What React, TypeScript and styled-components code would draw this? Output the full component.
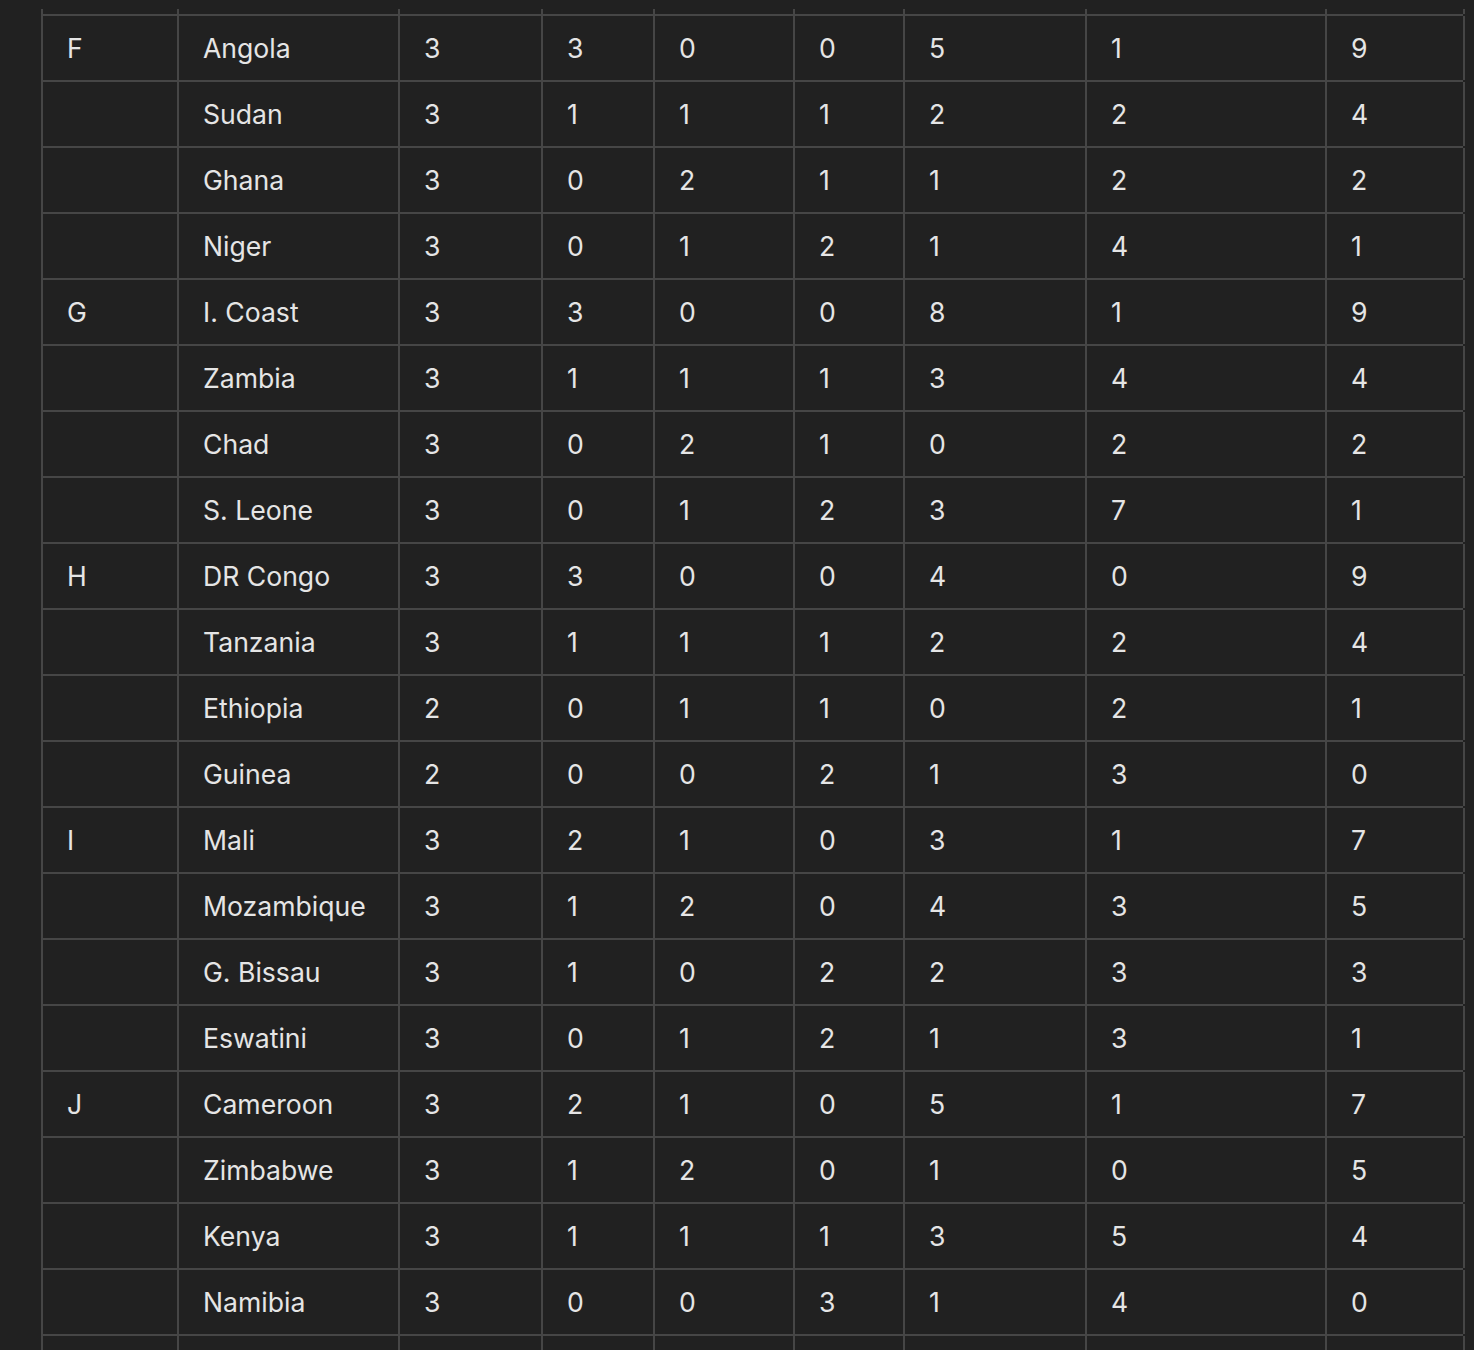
import React from "react";
import styled, { createGlobalStyle } from "styled-components";

const Global = createGlobalStyle`
  html, body {
    margin: 0;
    padding: 0;
    background: #212121;
  }
  body {
    font-family: Inter, "Noto Sans", "Liberation Sans", sans-serif;
    -webkit-font-smoothing: antialiased;
  }
`;

const COLS = "136px 221px 143px 112px 140px 110px 182px 240px 138px";
const LINE = "#464646";

const Page = styled.div`
  padding: 9px 0 0 41px;
  height: 1350px;
  overflow: hidden;
  box-sizing: border-box;
`;

const Table = styled.div`
  display: flex;
  flex-direction: column;
  width: max-content;
`;

const Row = styled.div<{ $stub?: boolean }>`
  display: grid;
  grid-template-columns: ${COLS};
  height: ${(p) => (p.$stub ? "5px" : "66px")};
  box-sizing: border-box;
  border-top: ${(p) => (p.$stub ? "none" : `2px solid ${LINE}`)};
`;

const Cell = styled.div<{ $last?: boolean }>`
  box-sizing: border-box;
  border-left: 2px solid ${LINE};
  ${(p) => (p.$last ? `border-right: 2px solid ${LINE}; width: 140px;` : "")}
  padding: 0 0 0 24px;
  display: flex;
  align-items: center;
  color: #e5e5e5;
  font-size: 26.6px;
  font-weight: 400;
  white-space: nowrap;
  overflow: hidden;
`;

type R = [string, string, number, number, number, number, number, number, number];

const data: R[] = [
  ["F", "Angola", 3, 3, 0, 0, 5, 1, 9],
  ["", "Sudan", 3, 1, 1, 1, 2, 2, 4],
  ["", "Ghana", 3, 0, 2, 1, 1, 2, 2],
  ["", "Niger", 3, 0, 1, 2, 1, 4, 1],
  ["G", "I. Coast", 3, 3, 0, 0, 8, 1, 9],
  ["", "Zambia", 3, 1, 1, 1, 3, 4, 4],
  ["", "Chad", 3, 0, 2, 1, 0, 2, 2],
  ["", "S. Leone", 3, 0, 1, 2, 3, 7, 1],
  ["H", "DR Congo", 3, 3, 0, 0, 4, 0, 9],
  ["", "Tanzania", 3, 1, 1, 1, 2, 2, 4],
  ["", "Ethiopia", 2, 0, 1, 1, 0, 2, 1],
  ["", "Guinea", 2, 0, 0, 2, 1, 3, 0],
  ["I", "Mali", 3, 2, 1, 0, 3, 1, 7],
  ["", "Mozambique", 3, 1, 2, 0, 4, 3, 5],
  ["", "G. Bissau", 3, 1, 0, 2, 2, 3, 3],
  ["", "Eswatini", 3, 0, 1, 2, 1, 3, 1],
  ["J", "Cameroon", 3, 2, 1, 0, 5, 1, 7],
  ["", "Zimbabwe", 3, 1, 2, 0, 1, 0, 5],
  ["", "Kenya", 3, 1, 1, 1, 3, 5, 4],
  ["", "Namibia", 3, 0, 0, 3, 1, 4, 0],
];

const emptyRow = ["", "", "", "", "", "", "", "", ""];

export default function App() {
  return (
    <>
      <Global />
      <Page>
        <Table>
          <Row $stub>
            {emptyRow.map((_, i) => (
              <Cell key={i} $last={i === 8} />
            ))}
          </Row>
          {data.map((r, ri) => (
            <Row key={ri}>
              {r.map((v, i) => (
                <Cell key={i} $last={i === 8}>
                  {v}
                </Cell>
              ))}
            </Row>
          ))}
          <Row>
            {emptyRow.map((_, i) => (
              <Cell key={i} $last={i === 8} />
            ))}
          </Row>
        </Table>
      </Page>
    </>
  );
}
